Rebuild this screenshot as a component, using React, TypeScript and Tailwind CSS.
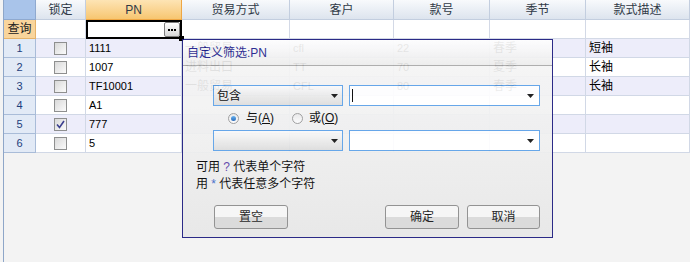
import React from 'react'

interface Row {
  n: number
  checked: boolean
  pn: string
  trade: string
  cust: string
  no: string
  season: string
  desc: string
}

const rows: Row[] = [
  { n: 1, checked: false, pn: '1111', trade: '一般贸易', cust: 'cfl', no: '22', season: '春季', desc: '短袖' },
  { n: 2, checked: false, pn: '1007', trade: '进料出口', cust: 'TT', no: '70', season: '夏季', desc: '长袖' },
  { n: 3, checked: false, pn: 'TF10001', trade: '一般贸易', cust: 'CFL', no: '80', season: '春季', desc: '长袖' },
  { n: 4, checked: false, pn: 'A1', trade: '', cust: '', no: '', season: '', desc: '' },
  { n: 5, checked: true, pn: '777', trade: '', cust: '', no: '', season: '', desc: '' },
  { n: 6, checked: false, pn: '5', trade: '', cust: '', no: '', season: '', desc: '' },
]

const COLS = 'grid grid-cols-[32px_50px_96px_108px_104px_96px_96px_104px]'

function Checkbox({ checked }: { checked: boolean }) {
  return (
    <div className="w-[13px] h-[13px] border border-[#8e8f8f] bg-linear-to-br from-[#d9d9d9] to-[#fbfbfb] flex items-center justify-center">
      {checked && (
        <svg width="9" height="9" viewBox="0 0 9 9">
          <path d="M1 4.5 L3.5 7.5 L8 1" fill="none" stroke="#3b3f8f" strokeWidth="1.6" />
        </svg>
      )}
    </div>
  )
}

function Arrow() {
  return (
    <svg width="7" height="4" viewBox="0 0 7 4">
      <polygon points="0,0 7,0 3.5,4" fill="#111" />
    </svg>
  )
}

function Radio({ on }: { on: boolean }) {
  return (
    <div className="w-[11px] h-[11px] rounded-full border border-[#9a9a9a] bg-linear-to-b from-[#e9e9e9] to-[#fdfdfd] flex items-center justify-center">
      {on && <div className="w-[5px] h-[5px] rounded-full bg-linear-to-b from-[#5fb0f0] to-[#1a5fb4]" />}
    </div>
  )
}

function Btn({ label, w }: { label: string; w: string }) {
  return (
    <div
      className={`${w} h-[24px] rounded-[3px] border border-[#8b8b8b] bg-linear-to-b from-[#f7f7f7] from-50% to-[#d9d9d9] to-50% flex items-center justify-center text-[12px] text-[#111]`}
    >
      {label}
    </div>
  )
}

export default function App() {
  return (
    <div className="relative w-[690px] h-[262px] overflow-hidden bg-[#f3f3f3] font-['Liberation_Sans','Noto_Sans_CJK_SC',sans-serif] text-[12px] text-black">
      <div className="pl-[3px] h-full">
        <div className="border-l border-[#8ea6c8] h-full">
          {/* header */}
          <div className={`${COLS} h-[20px] text-[#2f3946]`}>
            <div className="bg-[#a9c4ea] border-r border-b border-[#8fa9cf]" />
            {['锁定', 'PN', '贸易方式', '客户', '款号', '季节', '款式描述'].map((h) =>
              h === 'PN' ? (
                <div key={h} className="bg-linear-to-b from-[#fde4b4] to-[#f7c670] border-r border-b border-[#eea643] flex items-center justify-center">
                  {h}
                </div>
              ) : (
                <div key={h} className="bg-linear-to-b from-[#f8fafc] to-[#dde4ee] border-r border-b border-[#c3cedf] flex items-center justify-center">
                  {h}
                </div>
              )
            )}
          </div>

          {/* query row */}
          <div className={`${COLS} h-[19px]`}>
            <div className="bg-[#f9d59c] border-r border-b border-[#e6b36a] flex items-center justify-center text-[#222]">查询</div>
            <div className="bg-white border-r border-b border-[#d3d9e6]" />
            <div className="bg-white border-2 border-black flex items-center justify-end">
              <div className="w-[16px] h-[15px] rounded-[2px] border border-[#7d7d7d] bg-linear-to-b from-white to-[#d6d6d6] flex items-center justify-center gap-[1px]">
                <div className="w-[2px] h-[2px] bg-black" />
                <div className="w-[2px] h-[2px] bg-black" />
                <div className="w-[2px] h-[2px] bg-black" />
              </div>
            </div>
            {[0, 1, 2, 3, 4].map((i) => (
              <div key={i} className="bg-white border-r border-b border-[#d3d9e6]" />
            ))}
          </div>

          {/* data rows */}
          {rows.map((r) => {
            const bg = r.n % 2 === 1 ? 'bg-[#ededfa]' : 'bg-white'
            const cell = `${bg} border-r border-b border-[#d1d8e6] px-[3px] leading-[18px] whitespace-nowrap overflow-hidden`
            return (
              <div key={r.n} className={`${COLS} h-[19px]`}>
                <div className="bg-[#e2eaf6] border-r border-b border-[#a9bcd8] flex items-center justify-center text-[11px] text-[#1d3f7c]">
                  {r.n}
                </div>
                <div className={`${bg} border-r border-b border-[#d1d8e6] flex items-center justify-center`}>
                  <Checkbox checked={r.checked} />
                </div>
                <div className={`${cell} text-[11px]`}>{r.pn}</div>
                <div className={cell}>{r.trade}</div>
                <div className={`${cell} text-[11px]`}>{r.cust}</div>
                <div className={`${cell} text-[11px]`}>{r.no}</div>
                <div className={cell}>{r.season}</div>
                <div className={cell}>{r.desc}</div>
              </div>
            )
          })}
        </div>
      </div>

      {/* fill handle of active cell */}
      <div className="absolute left-[179px] top-[36px] w-[5px] h-[5px] bg-black" />

      {/* custom filter popup, slightly see-through */}
      <div className="absolute left-[182px] top-[39px] w-[371px] h-[199px] border border-[#1b1a7e] opacity-[0.92] bg-linear-to-b from-[#f7f7f7] to-[#e8e8e8] flex flex-col">
        <div className="h-[26px] shrink-0 border-b border-[#a8a8a8] bg-linear-to-b from-white to-[#ececec] pl-[4px] flex items-center text-[#1c1c8c]">
          自定义筛选:PN
        </div>
        <div className="flex flex-col pl-[13px] pr-[12px] pt-[19px]">
          <div className="ml-[17px] flex gap-[6px]">
            <div className="w-[130px] h-[21px] border border-[#5ba0e8] bg-linear-to-b from-[#fafafa] to-[#dcdcdc] flex items-center justify-between pl-[3px] pr-[4px]">
              <span>包含</span>
              <Arrow />
            </div>
            <div className="w-[191px] h-[21px] border border-[#5ba0e8] bg-white flex items-center justify-between pl-[2px] pr-[5px]">
              <div className="w-[1px] h-[13px] bg-black" />
              <Arrow />
            </div>
          </div>
          <div className="h-[24px] ml-[32px] flex items-center">
            <Radio on />
            <span className="ml-[7px]">
              与(<span className="underline">A</span>)
            </span>
            <div className="ml-[18px]">
              <Radio on={false} />
            </div>
            <span className="ml-[6px]">
              或(<span className="underline">O</span>)
            </span>
          </div>
          <div className="ml-[17px] flex gap-[6px]">
            <div className="w-[130px] h-[21px] border border-[#5ba0e8] bg-linear-to-b from-[#fafafa] to-[#dcdcdc] flex items-center justify-end pr-[4px]">
              <Arrow />
            </div>
            <div className="w-[191px] h-[21px] border border-[#5ba0e8] bg-white flex items-center justify-end pr-[5px]">
              <Arrow />
            </div>
          </div>
          <div className="mt-[8px] leading-[17px]">
            <div>
              可用 <span className="text-[#5a3ea8]">?</span> 代表单个字符
            </div>
            <div>
              用 <span className="text-[#3a66c8]">*</span> 代表任意多个字符
            </div>
          </div>
          <div className="mt-[12px] flex justify-between">
            <div className="ml-[18px]">
              <Btn label="置空" w="w-[74px]" />
            </div>
            <div className="flex gap-[8px]">
              <Btn label="确定" w="w-[74px]" />
              <Btn label="取消" w="w-[73px]" />
            </div>
          </div>
        </div>
      </div>
    </div>
  )
}
